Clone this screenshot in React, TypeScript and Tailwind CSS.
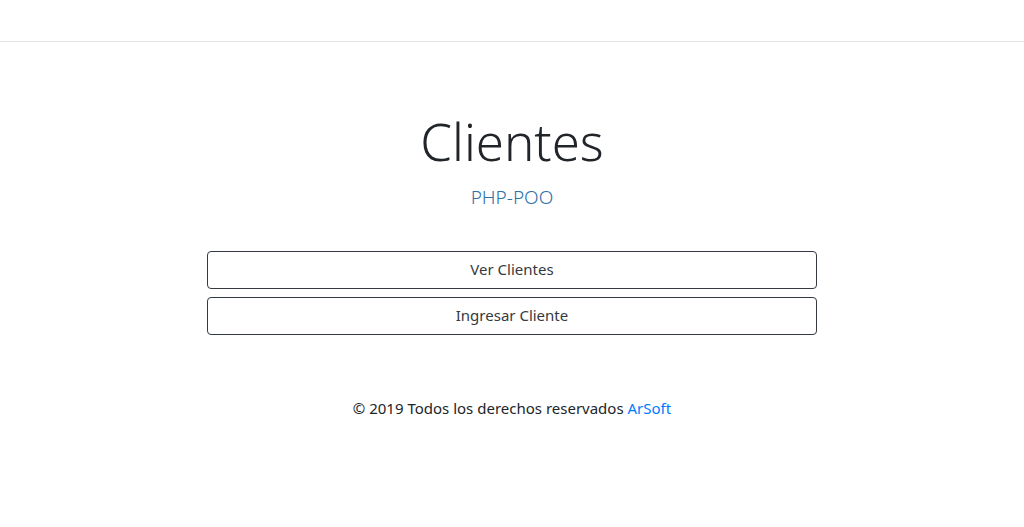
export default function App() {
  return (
    <div className="min-h-[527px] bg-white text-[#212529]" style={{ fontFamily: '"Noto Sans", "Open Sans", sans-serif' }}>
      <div className="h-[42px] border-b border-[#e5e5e5]" />
      <div className="flex flex-col items-center">
        <h1 className="mt-[69px] text-[51px] font-light leading-[1.2] text-[#212529]">Clientes</h1>
        <p className="mt-[11px] text-[19px] font-light leading-[1.5] text-[#2f6fa8]">PHP-POO</p>
        <div className="mt-[39px] flex w-[610px] flex-col gap-[8px]">
          <button className="h-[38px] w-full rounded-[4px] border border-[#343a40] text-[15px] text-[#343a40]">Ver Clientes</button>
          <button className="h-[38px] w-full rounded-[4px] border border-[#343a40] text-[15px] text-[#343a40]">Ingresar Cliente</button>
        </div>
        <p className="mt-[62px] text-[15px] leading-[1.5] text-[#212529]">
          © 2019 Todos los derechos reservados <a className="text-[#007bff]">ArSoft</a>
        </p>
      </div>
    </div>
  );
}
